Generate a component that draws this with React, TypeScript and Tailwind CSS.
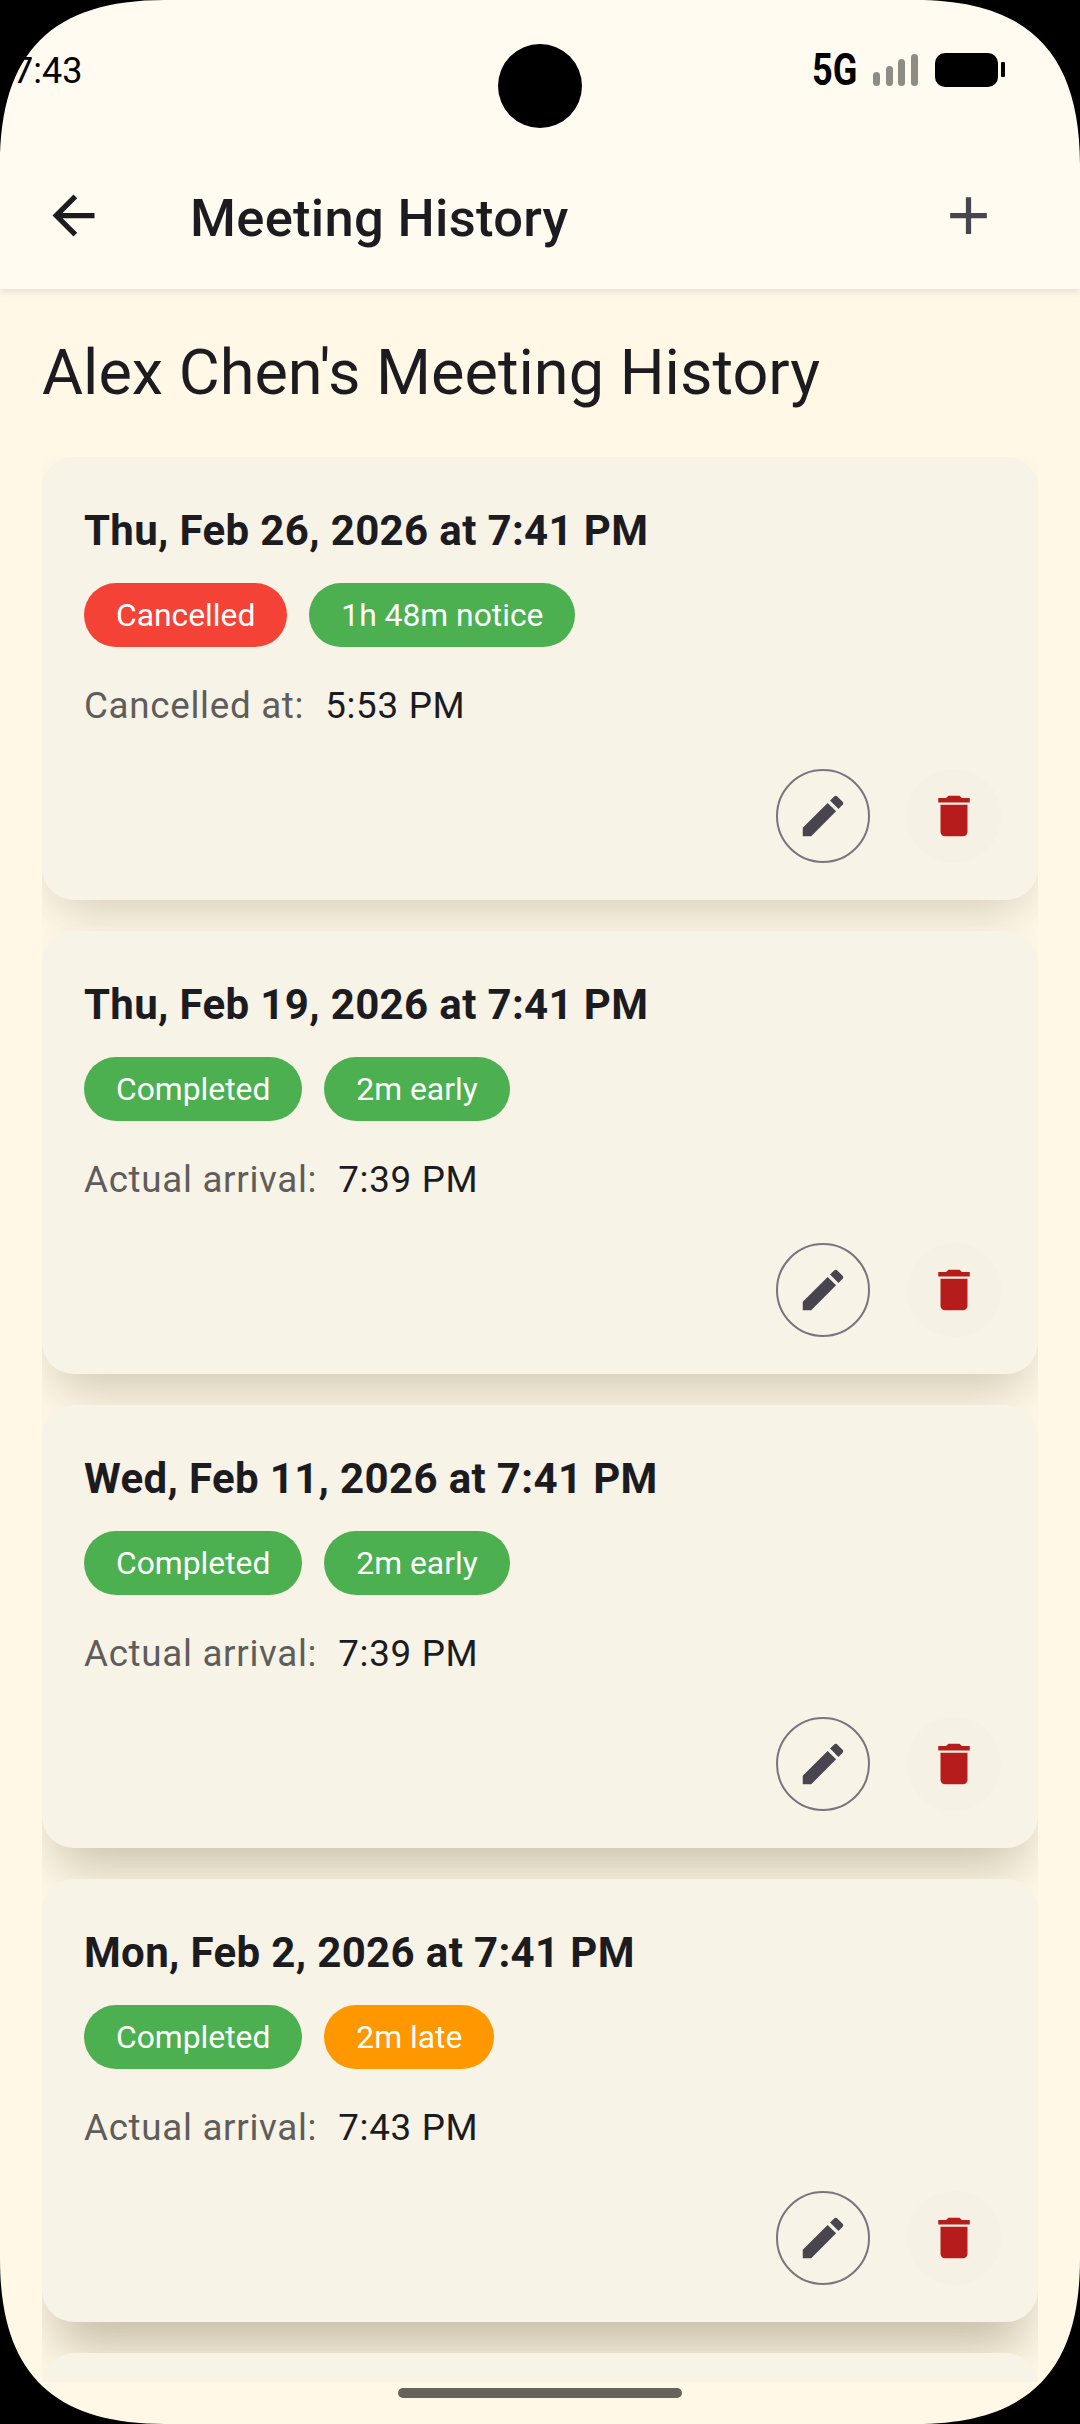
const meetings = [
  {
    date: 'Thu, Feb 26, 2026 at 7:41 PM',
    status: 'Cancelled',
    statusColor: 'bg-[#F44336]',
    note: '1h 48m notice',
    noteColor: 'bg-[#4CAF50]',
    label: 'Cancelled at:',
    time: '5:53 PM',
    shadow: 'shadow-[0_24px_50px_-14px_rgba(70,60,30,0.23)]',
  },
  {
    date: 'Thu, Feb 19, 2026 at 7:41 PM',
    status: 'Completed',
    statusColor: 'bg-[#4CAF50]',
    note: '2m early',
    noteColor: 'bg-[#4CAF50]',
    label: 'Actual arrival:',
    time: '7:39 PM',
    shadow: 'shadow-[0_29px_50px_-14px_rgba(70,60,30,0.26)]',
  },
  {
    date: 'Wed, Feb 11, 2026 at 7:41 PM',
    status: 'Completed',
    statusColor: 'bg-[#4CAF50]',
    note: '2m early',
    noteColor: 'bg-[#4CAF50]',
    label: 'Actual arrival:',
    time: '7:39 PM',
    shadow: 'shadow-[0_34px_50px_-14px_rgba(70,60,30,0.28)]',
  },
  {
    date: 'Mon, Feb 2, 2026 at 7:41 PM',
    status: 'Completed',
    statusColor: 'bg-[#4CAF50]',
    note: '2m late',
    noteColor: 'bg-[#FF9800]',
    label: 'Actual arrival:',
    time: '7:43 PM',
    shadow: 'shadow-[0_39px_50px_-14px_rgba(70,60,30,0.31)]',
  },
];

function Corner({ className }: { className: string }) {
  return (
    <svg viewBox="0 0 165 165" className={`absolute z-30 w-[165px] h-[165px] ${className}`}>
      <path d="M0 0H165C52 0 0 52 0 165Z" fill="#000" />
    </svg>
  );
}

function Chip({ text, color }: { text: string; color: string }) {
  return (
    <span className={`h-[64px] px-[32px] pt-[2px] rounded-full flex items-center text-[31.8px] text-white ${color}`}>
      {text}
    </span>
  );
}

function MeetingCard({ meeting }: { meeting: (typeof meetings)[number] }) {
  return (
    <div className={`shrink-0 bg-[#F7F3E6] rounded-[32px] pt-[46px] pb-[37px] pl-[42px] pr-[37px] ${meeting.shadow}`}>
      <div className="text-[42px] leading-[56px] font-bold tracking-[0.35px] text-[#1C1B1F]">{meeting.date}</div>
      <div className="mt-[24px] flex gap-[22px]">
        <Chip text={meeting.status} color={meeting.statusColor} />
        <Chip text={meeting.note} color={meeting.noteColor} />
      </div>
      <div className="mt-[37px] flex gap-[21px] text-[36.75px] leading-[44px] tracking-[0.7px]">
        <span className="text-[#5F5D5B]">{meeting.label}</span>
        <span className="text-[#1C1B1F]">{meeting.time}</span>
      </div>
      <div className="mt-[41px] flex justify-end gap-[37px]">
        <button className="w-[94px] h-[94px] rounded-full border-[2.6px] border-[#79747E] flex items-center justify-center">
          <svg viewBox="0 0 24 24" className="w-[54px] h-[54px]" fill="#49454F">
            <path d="M3 17.25V21h3.75L17.81 9.94l-3.75-3.75L3 17.25zM20.71 7.04c.39-.39.39-1.02 0-1.41l-2.34-2.34c-.39-.39-1.02-.39-1.41 0l-1.83 1.83 3.75 3.75 1.83-1.83z" />
          </svg>
        </button>
        <button className="w-[94px] h-[94px] rounded-full bg-[#F5F2E5] flex items-center justify-center">
          <svg viewBox="0 0 24 24" className="w-[54px] h-[54px]" fill="#B71C1C">
            <path d="M6 19c0 1.1.9 2 2 2h8c1.1 0 2-.9 2-2V7H6v12zM19 4h-3.5l-1-1h-5l-1 1H5v2h14V4z" />
          </svg>
        </button>
      </div>
    </div>
  );
}

export default function App() {
  return (
    <div className="relative w-[1080px] h-[2424px] overflow-hidden bg-[#FFF8E7] font-['Roboto',sans-serif]">
      {/* screen corners + camera cutout */}
      <Corner className="top-0 left-0" />
      <Corner className="top-0 right-0 -scale-x-100" />
      <Corner className="bottom-0 left-0 -scale-y-100" />
      <Corner className="bottom-0 right-0 -scale-100" />
      <div className="absolute z-30 left-[498px] top-[44px] w-[84px] h-[84px] rounded-full bg-black" />

      {/* app bar */}
      <header className="relative z-10 h-[289px] bg-[#FFFBF0] shadow-[0_2px_8px_rgba(80,70,40,0.16)]">
        <div className="h-[142px] pt-[49px] pl-[13px] pr-[75px] flex justify-between items-start">
          <span className="text-[36px] leading-[44px] text-black">7:43</span>
          <div className="flex items-center gap-[16px] h-[44px] -mt-[1px]">
            <span className="w-[45px] text-[44px] leading-[44px] font-bold text-black origin-left scale-x-[0.82]">5G</span>
            <svg viewBox="0 0 46 34" className="w-[46px] h-[34px]" fill="#8E8D85">
              <rect x="0" y="19" width="7" height="14" rx="3.5" />
              <rect x="13" y="13" width="7" height="20" rx="3.5" />
              <rect x="25" y="6" width="7" height="27" rx="3.5" />
              <rect x="38" y="1" width="7" height="32" rx="3.5" />
            </svg>
            <svg viewBox="0 0 70 34" className="w-[70px] h-[34px]" fill="#000">
              <rect x="0" y="0" width="63" height="34" rx="10" />
              <rect x="66" y="9" width="4" height="15" rx="1" />
            </svg>
          </div>
        </div>
        <div className="h-[147px] flex items-center pl-[42px] pr-[80px]">
          <svg viewBox="0 0 24 24" className="w-[63px] h-[63px]" fill="#1C1B1F">
            <path d="M20 11H7.83l5.59-5.59L12 4l-8 8 8 8 1.41-1.41L7.83 13H20v-2z" />
          </svg>
          <h1 className="ml-[85px] mt-[5px] flex-1 text-[52.5px] font-medium tracking-[0.3px] text-[#1C1B1F]">Meeting History</h1>
          <svg viewBox="0 0 24 24" className="w-[63px] h-[63px]" fill="#49454F">
            <path d="M19 13h-6v6h-2v-6H5v-2h6V5h2v6h6v2z" />
          </svg>
        </div>
      </header>

      <div className="h-[168px] pl-[42px] flex items-center">
        <h2 className="text-[63px] leading-[74px] text-[#1C1B1F] -mt-[1px]">Alex Chen's Meeting History</h2>
      </div>

      <div className="mx-[42px] h-[1925px] overflow-hidden flex flex-col gap-[31px]">
        {meetings.map((m) => (
          <MeetingCard key={m.date} meeting={m} />
        ))}
        <div className="shrink-0 h-[443px] bg-[#F7F3E6] rounded-[32px]" />
      </div>

      {/* home indicator */}
      <div className="pt-[6px] flex justify-center">
        <div className="w-[284px] h-[10px] rounded-full bg-[#66635A]" />
      </div>
    </div>
  );
}
